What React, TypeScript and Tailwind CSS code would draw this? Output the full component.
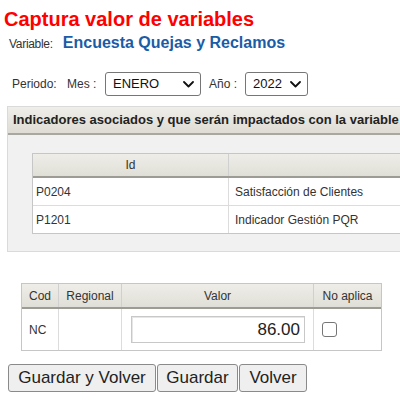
import React from "react";

function Chevron() {
  return (
    <svg width="11" height="7" viewBox="0 0 11 7" className="shrink-0">
      <path d="M1 1 L5.5 5.5 L10 1" fill="none" stroke="#111" strokeWidth="1.8" strokeLinecap="round" strokeLinejoin="round" />
    </svg>
  );
}

function FakeSelect({ value, width }: { value: string; width: string }) {
  return (
    <div className={`${width} h-[24px] border border-[#767676] rounded-[3px] bg-white flex items-center justify-between pl-[7px] pr-[6px] text-[13px] text-[#111]`}>
      <span>{value}</span>
      <Chevron />
    </div>
  );
}

export default function App() {
  return (
    <div className="w-[400px] h-[404px] overflow-hidden bg-white font-['Liberation_Sans',Arial,sans-serif] text-[#333] pt-[7px]">
      <div className="h-[24px] leading-[24px] pl-[4px] text-[20px] font-bold text-[#ff0000] whitespace-nowrap">
        Captura valor de variables
      </div>
      <div className="mt-[2px] h-[20px] leading-[20px] pl-[9px] flex items-baseline gap-[10px] whitespace-nowrap">
        <span className="text-[12px] text-[#333] tracking-[-0.3px]">Variable:</span>
        <span className="text-[16px] font-bold text-[#1b5ca6]">Encuesta Quejas y Reclamos</span>
      </div>

      <div className="mt-[19px] h-[24px] flex items-center whitespace-nowrap text-[12px] text-[#333]">
        <span className="ml-[12px] w-[55px]">Periodo:</span>
        <span className="w-[38px]">Mes :</span>
        <FakeSelect value="ENERO" width="w-[96px]" />
        <span className="ml-[8px] w-[36px]">Año :</span>
        <FakeSelect value="2022" width="w-[63px]" />
      </div>

      <div className="mt-[10px] ml-[7px] w-[600px] border border-[#dadada] bg-[#f1f1f1]">
        <div className="h-[28px] leading-[26px] border-b-2 border-[#a8a8a0] bg-gradient-to-b from-[#efeee9] to-[#dedcd4] pl-[5px] text-[13px] font-bold text-[#222] whitespace-nowrap">
          Indicadores asociados y que serán impactados con la variable
        </div>
        <div className="pt-[18px] pl-[24px] pb-[17px]">
          <div className="w-[540px] border border-[#c6c6c6] bg-white text-[12px] text-[#333]">
            <div className="flex h-[24px] border-b-2 border-[#9c9c94] bg-gradient-to-b from-[#eeede8] to-[#e0dfd7]">
              <div className="w-[196px] border-r border-[#d0d0d0] flex items-center justify-center">Id</div>
              <div className="flex-1"></div>
            </div>
            <div className="flex h-[28px] border-b border-[#dcdcdc]">
              <div className="w-[196px] border-r border-[#dcdcdc] flex items-center pl-[3px]">P0204</div>
              <div className="flex-1 flex items-center pl-[6px]">Satisfacción de Clientes</div>
            </div>
            <div className="flex h-[27px]">
              <div className="w-[196px] border-r border-[#dcdcdc] flex items-center pl-[3px]">P1201</div>
              <div className="flex-1 flex items-center pl-[6px]">Indicador Gestión PQR</div>
            </div>
          </div>
        </div>
      </div>

      <div className="mt-[31px] ml-[21px] w-[361px] border border-[#c6c6c6] bg-white text-[12px] text-[#333]">
        <div className="flex h-[25px] border-b-2 border-[#9c9c94] bg-gradient-to-b from-[#eeede8] to-[#e0dfd7]">
          <div className="w-[37px] border-r border-[#d0d0d0] flex items-center justify-center">Cod</div>
          <div className="w-[63px] border-r border-[#d0d0d0] flex items-center justify-center">Regional</div>
          <div className="w-[192px] border-r border-[#d0d0d0] flex items-center justify-center">Valor</div>
          <div className="flex-1 flex items-center justify-center">No aplica</div>
        </div>
        <div className="flex h-[41px]">
          <div className="w-[37px] border-r border-[#dcdcdc] flex items-center pl-[7px]">NC</div>
          <div className="w-[63px] border-r border-[#dcdcdc]"></div>
          <div className="w-[192px] border-r border-[#dcdcdc] flex items-center pl-[9px]">
            <div className="w-[174px] h-[27px] border border-[#c8c8c8] shadow-[inset_1px_1px_0_#e6e6e6] flex items-center justify-end pr-[4px] text-[17px] text-[#222]">
              86.00
            </div>
          </div>
          <div className="flex-1 flex items-center pl-[8px]">
            <div className="w-[15px] h-[15px] border border-[#767676] rounded-[3px] bg-white"></div>
          </div>
        </div>
      </div>

      <div className="mt-[13px] ml-[8px] flex gap-[1px] text-[17px] text-[#222]">
        <div className="w-[148px] h-[28px] border border-[#8a8a8a] rounded-[3px] bg-[#efefef] flex items-center justify-center">Guardar y Volver</div>
        <div className="w-[81px] h-[28px] border border-[#8a8a8a] rounded-[3px] bg-[#efefef] flex items-center justify-center">Guardar</div>
        <div className="w-[68px] h-[28px] border border-[#8a8a8a] rounded-[3px] bg-[#efefef] flex items-center justify-center">Volver</div>
      </div>
    </div>
  );
}
